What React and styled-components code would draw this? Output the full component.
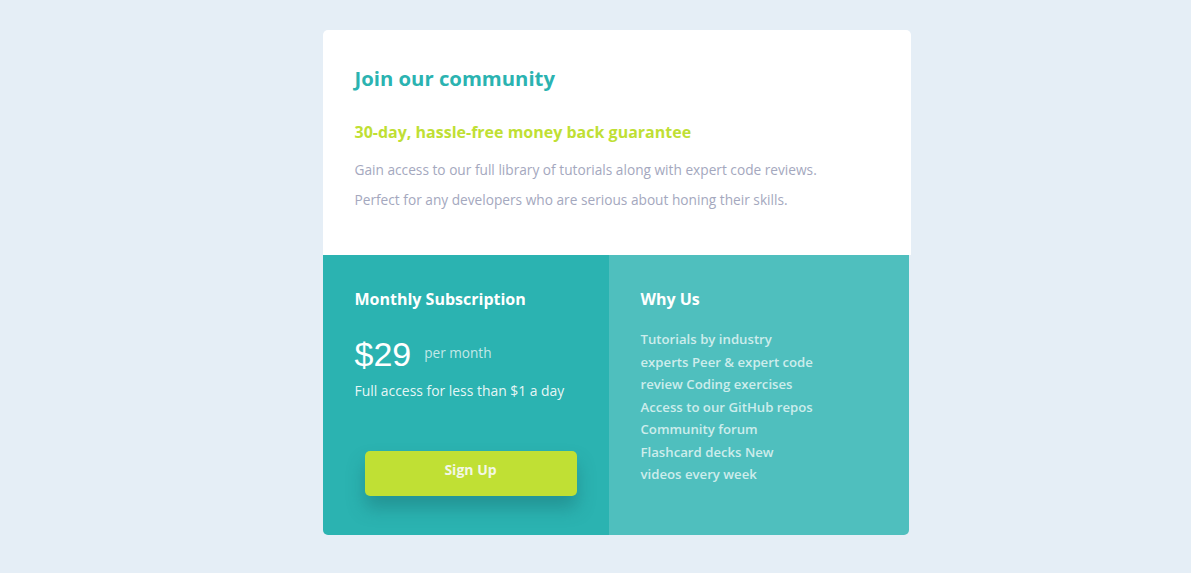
import React from "react";
import styled, { createGlobalStyle } from "styled-components";

const GlobalStyle = createGlobalStyle`
  html, body { margin: 0; padding: 0; }
  body {
    background: #e5eef6;
    font-family: "Open Sans", "Noto Sans", sans-serif;
    -webkit-font-smoothing: antialiased;
  }
`;

const Page = styled.main`
  min-height: 573px;
  display: flex;
  justify-content: center;
  padding: 30px 0 0 42px;
  box-sizing: border-box;
`;

const Card = styled.section`
  width: 588px;
  display: flex;
  flex-direction: column;
`;

const Top = styled.div`
  background: #ffffff;
  border-radius: 5px 5px 0 0;
  padding: 36px 32px 0;
  height: 225px;
  box-sizing: border-box;
`;

const Title = styled.h1`
  margin: 0;
  font-size: 20.3px;
  line-height: 24px;
  font-weight: 700;
  color: #2bb3b1;
`;

const Subtitle = styled.h2`
  margin: 30px 0 0;
  font-size: 16px;
  line-height: 24px;
  font-weight: 700;
  color: #c0df34;
`;

const Text = styled.p`
  margin: 0;
  font-size: 13.7px;
  line-height: 30px;
  color: #a4a8be;
  &:first-of-type { margin-top: 11px; }
`;

const Bottom = styled.div`
  width: 586px;
  display: grid;
  grid-template-columns: 286px 300px;
  height: 280px;
`;

const Panel = styled.div`
  background: ${(p) => p.$bg};
  padding: 32px 32px 0;
  color: #ffffff;
  border-bottom-left-radius: ${(p) => (p.$first ? "5px" : "0")};
  border-bottom-right-radius: ${(p) => (p.$first ? "0" : "5px")};
  display: flex;
  flex-direction: column;
`;

const PanelTitle = styled.h3`
  margin: 0;
  font-size: 16px;
  line-height: 24px;
  font-weight: 700;
  color: #ffffff;
`;

const PriceRow = styled.div`
  display: flex;
  align-items: center;
  gap: 13px;
  margin-top: 23px;
  height: 40px;
`;

const Price = styled.span`
  font-family: "Liberation Sans", "Open Sans", sans-serif;
  font-size: 34px;
  font-weight: 400;
  color: #ffffff;
  line-height: 40px;
`;

const Per = styled.span`
  font-size: 13.6px;
  color: rgba(255, 255, 255, 0.72);
  margin-top: -4px;
`;

const Note = styled.p`
  margin: 7px 0 0;
  font-size: 13.9px;
  line-height: 20px;
  color: rgba(255, 255, 255, 0.9);
`;

const Button = styled.button`
  margin: 50px 0 0 10px;
  width: 212px;
  height: 45px;
  border: none;
  border-radius: 5px;
  background: #c0e034;
  color: #f3f7e6;
  font-family: "Open Sans", sans-serif;
  font-size: 14px;
  font-weight: 700;
  padding: 0 0 8px;
  box-shadow: 0 12px 18px rgba(20, 90, 95, 0.35);
  cursor: pointer;
`;

const List = styled.p`
  margin: 17px 0 0;
  width: 176px;
  font-size: 13.2px;
  font-weight: 600;
  line-height: 22.5px;
  color: rgba(255, 255, 255, 0.72);
`;

const reasons = [
  "Tutorials by industry experts",
  "Peer & expert code review",
  "Coding exercises",
  "Access to our GitHub repos",
  "Community forum",
  "Flashcard decks",
  "New videos every week",
];

export default function App() {
  return (
    <>
      <GlobalStyle />
      <Page>
        <Card>
          <Top>
            <Title>Join our community</Title>
            <Subtitle>30-day, hassle-free money back guarantee</Subtitle>
            <Text>Gain access to our full library of tutorials along with expert code reviews.</Text>
            <Text>Perfect for any developers who are serious about honing their skills.</Text>
          </Top>
          <Bottom>
            <Panel $bg="#2bb3b1" $first>
              <PanelTitle>Monthly Subscription</PanelTitle>
              <PriceRow>
                <Price>$29</Price>
                <Per>per month</Per>
              </PriceRow>
              <Note>Full access for less than $1 a day</Note>
              <Button>Sign Up</Button>
            </Panel>
            <Panel $bg="#4fbfbe">
              <PanelTitle>Why Us</PanelTitle>
              <List>{reasons.join(" ")}</List>
            </Panel>
          </Bottom>
        </Card>
      </Page>
    </>
  );
}
